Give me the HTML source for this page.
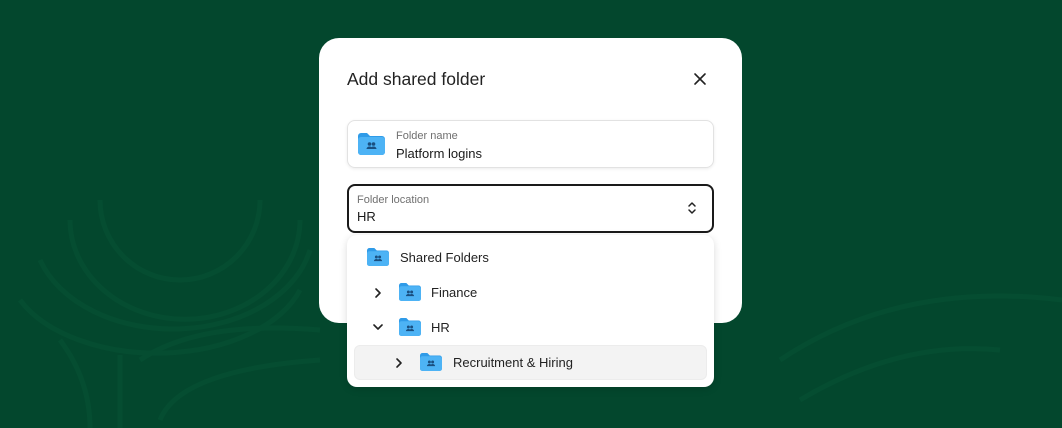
<!DOCTYPE html>
<html><head><meta charset="utf-8"><style>
*{margin:0;padding:0;box-sizing:border-box}
body{width:1062px;height:428px;background:#03472d;position:relative;overflow:hidden;font-family:"Liberation Sans",sans-serif;color:#1a1a1a}
.bg{position:absolute;left:0;top:0}
.modal{position:absolute;left:319px;top:38px;width:423px;height:285px;background:#fff;border-radius:20px}
.title{position:absolute;left:28px;top:31px;font-size:17.5px;color:#222}
.close{position:absolute;left:374px;top:34px}
.field{position:absolute;left:28px;top:82px;width:367px;height:48px;border:1px solid #e2e2e2;border-radius:8px;box-shadow:0 1px 3px rgba(0,0,0,.08)}
.lbl{position:absolute;font-size:11px;color:#707070}
.val{position:absolute;font-size:13px;color:#1a1a1a}
.sel{position:absolute;left:28px;top:146px;width:367px;height:49px;border:2px solid #1a1a1a;border-radius:8px}
.dd{position:absolute;left:347px;top:235px;width:367px;height:152px;background:#fff;border-radius:10px;box-shadow:0 2px 8px rgba(0,0,0,.15)}
.row{position:absolute;font-size:13px;color:#222}
.hl{position:absolute;left:7px;top:110px;width:353px;height:35px;background:#f3f3f3;border-radius:6px;border:1px solid #ececec}
</style></head><body>
<svg class="bg" width="1062" height="428" fill="none" stroke="#0a5a3a" stroke-width="5" opacity=".35">
<path d="M100 200 A80 80 0 0 0 260 200"/>
<path d="M70 220 A110 95 0 0 0 300 220"/>
<path d="M40 260 A140 100 0 0 0 310 250"/>
<path d="M20 300 A150 90 0 0 0 300 290"/>
<path d="M140 360 Q200 320 320 330"/>
<path d="M160 420 Q180 370 320 360"/>
<path d="M120 355 L120 428"/>
<path d="M60 340 Q90 380 90 428"/>
<path d="M1000 350 Q900 340 800 400"/>
<path d="M1062 300 Q900 280 780 360"/>
</svg>
<div class="modal">
<div class="title">Add shared folder</div>
<svg class="close" width="14" height="14" viewBox="0 0 14 14" stroke="#222" stroke-width="1.6" stroke-linecap="round"><path d="M2 2L12 12M12 2L2 12"/></svg>
<div class="field">
<svg style="position:absolute;left:10px;top:12px" width="27" height="22" viewBox="0 0 27 22"><path d="M0 3a3 3 0 0 1 3-3h6l3 3h12a3 3 0 0 1 3 3v13a3 3 0 0 1-3 3H3a3 3 0 0 1-3-3z" fill="#2f9be8"/><path d="M0 7a3 3 0 0 1 3-3h21a3 3 0 0 1 3 3v12a3 3 0 0 1-3 3H3a3 3 0 0 1-3-3z" fill="#4db3f5"/><circle cx="11.5" cy="11" r="1.8" fill="#1a4f80"/><circle cx="15.5" cy="11" r="1.8" fill="#1a4f80"/><path d="M8.5 16a3 2.5 0 0 1 6 0zM12.5 16a3 2.5 0 0 1 6 0z" fill="#1a4f80"/></svg>
<div class="lbl" style="left:48px;top:9px">Folder name</div>
<div class="val" style="left:48px;top:25px">Platform logins</div>
</div>
<div class="sel">
<div class="lbl" style="left:8px;top:8px">Folder location</div>
<div class="val" style="left:8px;top:23px">HR</div>
<svg style="position:absolute;left:337px;top:14px" width="12" height="16" viewBox="0 0 12 16" fill="none" stroke="#222" stroke-width="1.5" stroke-linecap="round" stroke-linejoin="round"><path d="M3 6l3-3 3 3M3 10l3 3 3-3"/></svg>
</div>
</div>
<div class="dd">
<div class="hl"></div>
<svg width="0" height="0" style="position:absolute"><defs><symbol id="f" viewBox="0 0 27 22"><path d="M0 3a3 3 0 0 1 3-3h6l3 3h12a3 3 0 0 1 3 3v13a3 3 0 0 1-3 3H3a3 3 0 0 1-3-3z" fill="#2f9be8"/><path d="M0 7a3 3 0 0 1 3-3h21a3 3 0 0 1 3 3v12a3 3 0 0 1-3 3H3a3 3 0 0 1-3-3z" fill="#4db3f5"/><circle cx="11.5" cy="11" r="1.8" fill="#1a4f80"/><circle cx="15.5" cy="11" r="1.8" fill="#1a4f80"/><path d="M8.5 16a3 2.5 0 0 1 6 0zM12.5 16a3 2.5 0 0 1 6 0z" fill="#1a4f80"/></symbol></defs></svg>
<svg style="position:absolute;left:20px;top:13px" width="22" height="18"><use href="#f"/></svg>
<div class="row" style="left:53px;top:15px">Shared Folders</div>
<svg style="position:absolute;left:27px;top:52px" width="8" height="12" fill="none" stroke="#222" stroke-width="1.6" stroke-linecap="round" stroke-linejoin="round"><path d="M2 2l4 4-4 4"/></svg>
<svg style="position:absolute;left:52px;top:48px" width="22" height="18"><use href="#f"/></svg>
<div class="row" style="left:84px;top:50px">Finance</div>
<svg style="position:absolute;left:25px;top:88px" width="12" height="8" fill="none" stroke="#222" stroke-width="1.6" stroke-linecap="round" stroke-linejoin="round"><path d="M2 2l4 4 4-4"/></svg>
<svg style="position:absolute;left:52px;top:83px" width="22" height="18"><use href="#f"/></svg>
<div class="row" style="left:84px;top:85px">HR</div>
<svg style="position:absolute;left:48px;top:122px" width="8" height="12" fill="none" stroke="#222" stroke-width="1.6" stroke-linecap="round" stroke-linejoin="round"><path d="M2 2l4 4-4 4"/></svg>
<svg style="position:absolute;left:73px;top:118px" width="22" height="18"><use href="#f"/></svg>
<div class="row" style="left:106px;top:120px">Recruitment &amp; Hiring</div>
</div>
</body></html>
